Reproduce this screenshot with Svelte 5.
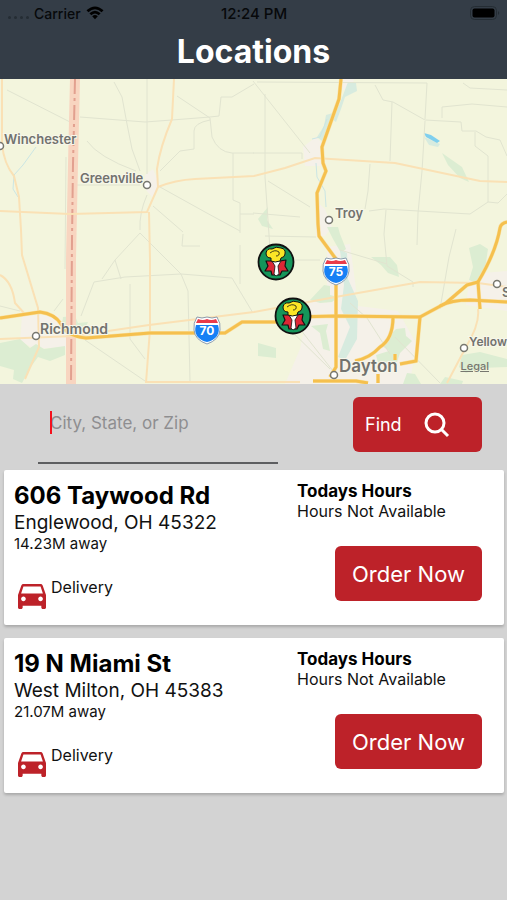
<script lang="ts">
	type Location = {
		street: string
		city: string
		distance: string
		hours: string
	}

	type Label = { name: string; x: number; y: number; size: number }
	type Point = { x: number; y: number }

	const locations: Location[] = [
		{
			street: '606 Taywood Rd',
			city: 'Englewood, OH 45322',
			distance: '14.23M away',
			hours: 'Hours Not Available'
		},
		{
			street: '19 N Miami St',
			city: 'West Milton, OH 45383',
			distance: '21.07M away',
			hours: 'Hours Not Available'
		}
	]

	const labels: Label[] = [
		{ name: 'Winchester', x: 4, y: 65, size: 13 },
		{ name: 'Greenville', x: 80, y: 104, size: 13 },
		{ name: 'Troy', x: 335, y: 139, size: 13 },
		{ name: 'Richmond', x: 40, y: 255, size: 14 },
		{ name: 'Dayton', x: 339, y: 293, size: 17 },
		{ name: 'S', x: 502, y: 218, size: 13 },
		{ name: 'Yellow', x: 469, y: 267, size: 12 }
	]

	const towns: Point[] = [
		{ x: 0, y: 67 },
		{ x: 147, y: 106 },
		{ x: 329, y: 141 },
		{ x: 36, y: 257 },
		{ x: 334, y: 296 },
		{ x: 497, y: 205 },
		{ x: 464, y: 269 }
	]

	const shields = [
		{ route: '70', x: 207, y: 251 },
		{ route: '75', x: 336, y: 192 }
	]

	const pins: Point[] = [
		{ x: 276, y: 183 },
		{ x: 293, y: 237 }
	]

	const countyRoads = [
		'M7 11 L72 44',
		'M80 38 L145 43 L172 41 L210 38 L219 37 L221 18 L232 18 L254 5',
		'M114 3 L122 18 L127 45 L132 70 L140 92',
		'M147 0 V95',
		'M177 17 L210 39 L212 58 Q218 73 232 74 H254',
		'M210 41 Q194 44 194 52 V70 L180 72 L160 92',
		'M87 62 Q98 78 136 92',
		'M233 74 V121 L240 124 V154',
		'M160 108 L205 133 L240 152',
		'M153 127 L175 146 L183 153',
		'M75 106 H140 M66 78 L65 190',
		'M147 116 Q139 134 140 151',
		'M140 154 L115 181 L102 200 M115 181 L121 200',
		'M81 237 L94 203 L125 198 L181 195 L232 199 L253 234',
		'M140 154 L181 195 L188 212 L190 303',
		'M130 205 V260 L145 280',
		'M85 261 L145 302',
		'M183 155 L182 167 H200 M240 135 H254',
		'M240 166 V205',
		'M0 227 L20 232 M54 232 L63 220',
		'M253 2 L310 74 M257 3 L427 4 L425 40',
		'M265 15 V98 L270 170',
		'M253 74 H302 V80',
		'M375 6 L383 21 L393 23 L425 41 L461 43 L462 52 L476 52 L486 58 L500 61 L507 77',
		'M392 23 L390 82',
		'M425 42 L422 92 L418 134 L417 166',
		'M442 39 V28 L472 25 L507 28 M463 4 L470 9 L507 11',
		'M475 53 V67 L488 77 V123 L498 124 L507 115',
		'M370 85 L368 112 L365 130',
		'M369 132 L384 130 L470 135 L488 123',
		'M253 134 L300 138 M268 102 L310 128',
		'M386 131 L384 155 L387 187 L413 203 V208',
		'M265 157 L316 158 M340 171 L387 185',
		'M295 181 H320 M456 150 L449 178 L440 230',
		'M277 238 L330 290 M300 250 L333 292',
		'M350 224 L367 239 L390 275 M395 258 L440 304'
	]

	const minorRoads = [
		'M2 0 V65 Q4 85 14 97 L19 118 L21 151',
		'M0 132 L70 135 L147 133 L158 108 L157 90 Q160 68 172 40 L174 0',
		'M158 108 Q175 101 195 100 L254 97 L285 89 L315 79 L395 84 L480 102 L507 103',
		'M149 133 L150 180 V250 L146 304',
		'M21 151 L22 176 L38 229 L39 268 L25 300',
		'M0 196 Q12 202 15 224 L24 234',
		'M0 260 L74 257 L149 246 L254 233 L330 219 L420 203 L478 204 L507 208',
		'M145 303 H300 M478 230 Q480 245 466 268 L447 304'
	]

	const highways = [
		'M0 239 L40 233 Q55 235 61 245 Q66 257 86 259 L150 254 H225 L242 243 L275 243 L295 238 L337 237 L420 238',
		'M341 0 L339 20 L322 68 L323 84 L326 92 L317 114 L318 145 L319 157 L336 180 V288 L330 298',
		'M420 238 L446 224 L467 206 L478 203 L480 230',
		'M440 227 Q451 221 470 221 L507 223',
		'M420 238 L416 282 L400 285',
		'M393 238 Q393 260 380 268 Q370 279 355 282',
		'M478 203 Q496 173 500 149 Q501 144 507 143',
		'M313 302 H340 L356 302 L368 304 M378 295 V304 M395 275 V281'
	]

	let query = $state('')
</script>

<svelte:head>
	<title>Locations</title>
</svelte:head>

<div class="screen">
	<header class="header">
		<div class="status">
			<div class="carrier">
				<span class="dots"><i></i><i></i><i></i><i></i></span>
				<span>Carrier</span>
				<svg class="wifi" viewBox="0 0 18 14" aria-hidden="true">
					<path d="M0.5 4.2 Q9 -3.4 17.5 4.2 L15.6 6.2 Q9 0.4 2.4 6.2 Z" />
					<path d="M3.4 7.2 Q9 2.2 14.6 7.2 L12.7 9.2 Q9 6 5.3 9.2 Z" />
					<path d="M6.2 10.2 Q9 7.8 11.8 10.2 L9 13.2 Z" />
				</svg>
			</div>
			<span>12:24 PM</span>
			<div class="power">
				<svg class="battery" viewBox="0 0 30 14" aria-hidden="true">
					<rect x="0.5" y="0.5" width="26" height="13" rx="4" fill="none" stroke="#252d34" />
					<rect x="2.5" y="2.5" width="22" height="9" rx="2" />
					<path d="M28 5 Q30.5 7 28 9 Z" fill="#252d34" />
				</svg>
			</div>
		</div>
		<h1>Locations</h1>
	</header>

	<div class="map">
		<svg viewBox="0 0 507 305" role="img" aria-label="Map of nearby locations">
			<rect width="507" height="305" fill="#f3f5dd" />

			<!-- towns -->
			<g fill="#f5f1e9">
				<path d="M145 96 L153 90 L160 106 L153 119 L146 111 Z" />
				<path d="M303 68 L316 58 L324 66 L321 87 H305 Z" />
				<path d="M316 122 L325 130 L332 148 L325 157 H316 Z" />
				<path d="M22 237 L58 236 L67 250 L66 268 L35 270 L20 262 Z" />
				<path d="M310 222 L350 226 L398 232 L416 264 L410 305 H285 L300 270 Z" />
				<path d="M327 168 L350 165 L356 210 L347 237 H327 Z" />
				<path d="M470 195 L507 192 V232 L466 226 Z" />
				<path d="M340 0 H354 L352 9 L343 11 Z" />
			</g>

			<!-- parks and woods -->
			<g fill="#dcedd2">
				<path d="M0 264 L20 260 L30 269 L36 265 L44 270 L65 267 V276 L50 282 L38 278 L30 289 L22 304 L13 300 L14 291 L0 287 Z" />
				<path d="M63 238 L75 237 L78 244 L88 243 L85 250 L70 248 L62 246 Z" />
				<path d="M442 74 L462 88 L469 103 L460 99 L448 86 Z" />
				<path d="M371 178 L390 178 L397 186 L399 198 L388 194 L381 186 Z" />
				<path d="M469 169 L480 165 L488 170 L485 190 L478 205 L469 201 L473 188 Z" />
				<path d="M310 221 L324 206 L330 207 V216 L338 218 L332 223 L320 224 Z" />
				<path d="M258 264 L276 269 V279 L258 277 Z" />
				<path d="M311 247 L328 245 L326 252 L330 272 L323 270 L320 254 Z" />
				<path d="M386 260 L396 250 L405 249 L406 257 L412 262 L400 274 L397 283 L378 284 L376 276 L389 272 L381 266 Z" />
				<path d="M407 294 L415 295 L421 305 H403 Z" />
				<path d="M462 276 L480 273 L507 280 V288 L480 289 L466 294 L459 288 Z" />
				<path d="M258 140 L268 128 L267 141 L273 150 L262 147 Z" />
				<path d="M445 298 L463 302 L462 305 H440 Z" />
				<path d="M327 148 H338 L340 155 L346 170 L341 174 L333 160 Z" />
			</g>

			<!-- river valleys -->
			<g fill="#d7ebdf">
				<path d="M348 3 L356 4 L357 12 L345 18 L341 30 L336 43 L332 40 L340 24 Z" />
				<path d="M326 36 L333 34 L329 50 L322 62 L317 58 L324 47 Z" />
				<path d="M340 171 L347 174 L348 200 L358 222 L357 260 L345 281 L338 278 L350 248 L341 230 L344 206 Z" />
				<path d="M424 58 L440 65 L438 68 L429 66 Z" />
			</g>
			<path d="M424 54 L431 56 L440 62 L437 64 L426 58 Z" fill="#7fcfee" />
			<g fill="none" stroke="#cbe6e4">
				<path d="M36 68 L23 86 L14 96 L13 110 L18 118" />
				<path d="M316 84 L317 98 L325 112 L326 128" />
				<path d="M312 60 L320 58 L327 40" />
			</g>

			<g class="county">
				{#each countyRoads as road}
					<path d={road} />
				{/each}
			</g>

			<!-- state line -->
			<path d="M75 0 L73 85 L71 180 V305" stroke="#f8d5c0" stroke-width="10" fill="none" />
			<path
				d="M75 0 L74 45 L73 85 L72 160 L71 305"
				stroke="#e2a08f"
				stroke-width="2"
				stroke-dasharray="15 4 3 4"
				fill="none"
			/>

			<g class="minor">
				{#each minorRoads as road}
					<path d={road} />
				{/each}
			</g>
			<g class="highway-edge">
				{#each highways as road}
					<path d={road} />
				{/each}
			</g>
			<g class="highway">
				{#each highways as road}
					<path d={road} />
				{/each}
			</g>

			{#each towns as town}
				<circle cx={town.x} cy={town.y} r="3.5" fill="#fff" stroke="#77776f" stroke-width="1.5" />
			{/each}

			{#each labels as label}
				<text class="label" x={label.x} y={label.y} font-size={label.size}>{label.name}</text>
			{/each}

			{#each shields as shield}
				<g transform="translate({shield.x} {shield.y})">
					<path
						d="M-10 -13 Q-5 -11 0 -13 Q5 -11 10 -13 Q14 -7 13 0 Q12 10 0 14 Q-12 10 -13 0 Q-14 -7 -10 -13 Z"
						fill="#fff"
						stroke="#8b9cae"
					/>
					<path d="M-9 -11 Q-4 -9 0 -11 Q4 -9 9 -11 L11 -7 H-11 Z" fill="#e93b4a" />
					<path d="M-11 -5 H11 Q13 1 10 6 Q6 11 0 12 Q-6 11 -10 6 Q-13 1 -11 -5 Z" fill="#1680f5" />
					<text class="route" y="5">{shield.route}</text>
				</g>
			{/each}

			{#each pins as pin}
				<g transform="translate({pin.x} {pin.y})" stroke="#111" stroke-linejoin="round">
					<circle r="17.5" fill="#15955a" stroke-width="1.8" />
					<path
						d="M-10 -1 L-4 -1 L0 3 L4 -1 L10 -2 L9 4 L12 9 L6 9 L4 13 H-4 L-5 9 L-11 9 L-8 4 Z"
						fill="#dc2735"
						stroke-width="1.2"
					/>
					<path d="M-4 -1 H5 L2 4 L3 12 L0 14 L-2 12 L-1 4 Z" fill="#fff" stroke-width="0.8" />
					<path
						d="M-5 -4 Q-10 -4 -10 -9 Q-9 -14 -4 -13 Q0 -16 5 -14 Q10 -13 9 -8 Q9 -5 5 -4 L4 -1 Q-1 1 -5 -1 Z"
						fill="#fbe526"
						stroke-width="1"
					/>
					<path d="M-6 -9 Q-1 -13 3 -10 Q4 -6 0 -6" fill="none" stroke-width="0.8" />
				</g>
			{/each}
		</svg>
		<a class="legal" href="#legal">Legal</a>
	</div>

	<form class="search" onsubmit={(event) => event.preventDefault()}>
		<div class="field">
			{#if !query}
				<span class="caret"></span>
			{/if}
			<input type="text" aria-label="City, State, or Zip" placeholder="City, State, or Zip" bind:value={query} />
		</div>
		<button class="find" type="submit">
			Find
			<svg viewBox="0 0 26 26" aria-hidden="true">
				<circle cx="11" cy="11" r="9" />
				<path d="M17.5 17.5 L24 24" />
			</svg>
		</button>
	</form>

	<main class="list">
		{#each locations as location}
			<article class="card">
				<div>
					<h2>{location.street}</h2>
					<p class="city">{location.city}</p>
					<p class="distance">{location.distance}</p>
					<div class="service">
						<svg viewBox="3 5 18 16" aria-hidden="true">
							<path
								fill-rule="evenodd"
								d="M18.92 6.01C18.72 5.42 18.16 5 17.5 5h-11c-.66 0-1.21.42-1.42 1.01L3 12v8c0 .55.45 1 1 1h1c.55 0 1-.45 1-1v-1h12v1c0 .55.45 1 1 1h1c.55 0 1-.45 1-1v-8l-2.08-5.99zM6.5 16c-.83 0-1.5-.67-1.5-1.5S5.67 13 6.5 13s1.5.67 1.5 1.5S7.33 16 6.5 16zm11 0c-.83 0-1.5-.67-1.5-1.5s.67-1.5 1.5-1.5 1.5.67 1.5 1.5-.67 1.5-1.5 1.5zM5 11l1.5-4.5h11L19 11H5z"
							/>
						</svg>
						<span>Delivery</span>
					</div>
				</div>
				<div class="side">
					<h3>Todays Hours</h3>
					<p>{location.hours}</p>
					<button class="order" type="button">Order Now</button>
				</div>
			</article>
		{/each}
	</main>
</div>

<style>
	:global(body) {
		background: #d3d3d3;
	}

	.screen {
		min-height: 100vh;
		background: #d3d3d3;
		color: #111;
		font-family: Inter, 'Liberation Sans', sans-serif;
	}

	h1,
	h2,
	h3,
	p {
		margin: 0;
	}

	button,
	input {
		border: 0;
		font-family: inherit;
	}

	.header {
		padding-bottom: 1px;
		background: #343d47;
	}

	.status {
		display: grid;
		grid-template-columns: 1fr auto 1fr;
		align-items: center;
		height: 26px;
		padding: 0 7px 0 8px;
		color: #07090b;
		font-size: 15px;
		font-weight: 500;
	}

	.carrier {
		display: flex;
		align-items: center;
		gap: 5px;
		font-size: 14px;
	}

	.dots {
		display: flex;
		gap: 3px;
		padding-top: 8px;
	}

	.dots i {
		width: 3px;
		height: 3px;
		border-radius: 50%;
		background: #252d34;
	}

	.wifi {
		width: 18px;
		height: 14px;
	}

	.power {
		display: flex;
		justify-content: flex-end;
	}

	.battery {
		width: 30px;
		height: 14px;
	}

	h1 {
		color: #fff;
		font-size: 32px;
		font-weight: 700;
		line-height: 52px;
		text-align: center;
	}

	.map {
		position: relative;
	}

	.map svg {
		display: block;
		width: 100%;
		height: auto;
	}

	.county {
		fill: none;
		stroke: #e1e4d0;
		stroke-width: 1;
	}

	.minor {
		fill: none;
		stroke: #fae1b5;
		stroke-width: 2;
	}

	.highway-edge {
		fill: none;
		stroke: #f8e2a8;
		stroke-width: 4;
	}

	.highway {
		fill: none;
		stroke: #f5c04e;
		stroke-width: 3;
		stroke-linejoin: round;
	}

	.label {
		fill: #72726e;
		stroke: #f7f7ea;
		stroke-width: 2px;
		paint-order: stroke;
		font-weight: 600;
	}

	.route {
		fill: #fff;
		font-size: 12px;
		font-weight: 700;
		text-anchor: middle;
	}

	.legal {
		position: absolute;
		right: 18px;
		bottom: 11px;
		color: #77776f;
		font-size: 11px;
		font-weight: 500;
		line-height: 14px;
	}

	.search {
		display: flex;
		align-items: flex-start;
		justify-content: space-between;
		gap: 75px;
		padding: 13px 25px 6px 38px;
	}

	.field {
		position: relative;
		flex: 1;
	}

	.field input {
		box-sizing: border-box;
		display: block;
		width: 100%;
		height: 67px;
		padding: 0 12px 13px;
		border-bottom: 2px solid #5d5e60;
		border-radius: 0;
		outline: 0;
		background: transparent;
		caret-color: #f00;
		font-size: 17px;
	}

	.field input::placeholder {
		color: #8e8e90;
		opacity: 1;
	}

	.caret {
		position: absolute;
		top: 14px;
		left: 12px;
		width: 2px;
		height: 23px;
		background: #f5101c;
	}

	.find,
	.order {
		border-radius: 6px;
		background: #bd2229;
		color: #fff;
		cursor: pointer;
	}

	.find {
		display: flex;
		align-items: center;
		gap: 22px;
		width: 129px;
		height: 55px;
		padding: 0 12px;
		font-size: 18px;
	}

	.find svg {
		width: 26px;
		height: 26px;
		fill: none;
		stroke: #fff;
		stroke-width: 3;
	}

	.list {
		display: grid;
		gap: 13px;
		padding: 0 3px 16px 4px;
	}

	.card {
		display: grid;
		grid-template-columns: 1fr 185px;
		padding: 11px 22px 16px 10px;
		border-radius: 2px;
		background: #fff;
		box-shadow: 0 2px 3px rgba(0, 0, 0, 0.2);
	}

	h2 {
		color: #000;
		font-size: 24px;
		font-weight: 700;
		line-height: 30px;
	}

	.city {
		font-size: 19px;
		line-height: 23px;
	}

	.distance {
		font-size: 15px;
		line-height: 20px;
	}

	.service {
		display: flex;
		align-items: flex-start;
		gap: 5px;
		margin-top: 23px;
		padding-left: 4px;
		font-size: 16px;
		line-height: 20px;
	}

	.service svg {
		width: 28px;
		height: 25px;
		margin-top: 7px;
		fill: #bd2229;
	}

	.side {
		font-size: 16px;
		line-height: 20px;
	}

	h3 {
		color: #000;
		font-size: 17px;
		font-weight: 700;
		line-height: 20px;
	}

	.order {
		display: block;
		width: 147px;
		height: 55px;
		margin: 25px 0 0 auto;
		padding: 0;
		font-size: 22px;
	}
</style>
